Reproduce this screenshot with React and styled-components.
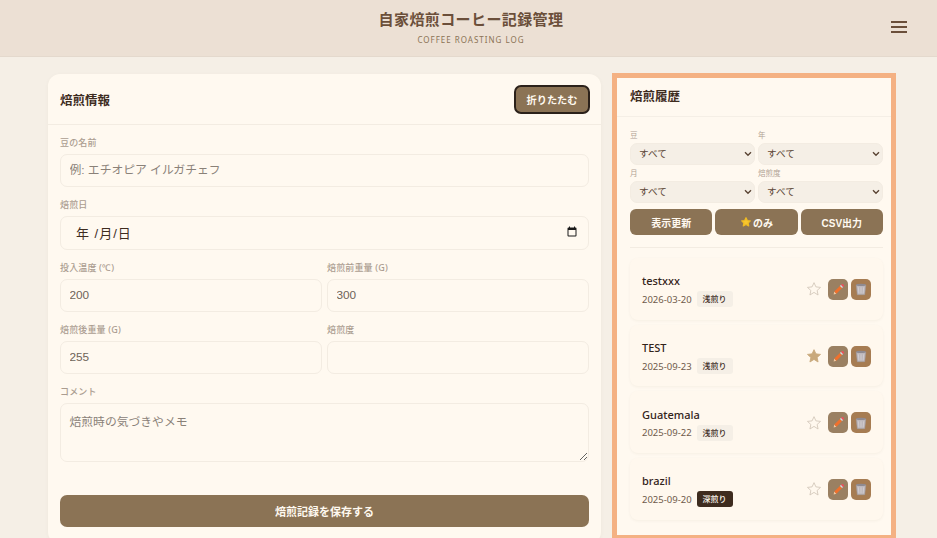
import React from "react";
import styled, { createGlobalStyle } from 'styled-components';

const FONT = `"Liberation Sans", "Noto Sans CJK JP", sans-serif`;
const NOTO = `"Noto Sans", "Noto Sans CJK JP", sans-serif`;

const chevron = `url("data:image/svg+xml,%3Csvg xmlns='http://www.w3.org/2000/svg' width='8' height='6' viewBox='0 0 8 6'%3E%3Cpath d='M1 1.2l3 3 3-3' fill='none' stroke='%235c4636' stroke-width='1.4'/%3E%3C/svg%3E")`;

const GlobalStyle = createGlobalStyle`
  html, body {
    margin: 0;
    height: 538px;
    overflow: hidden;
    background: #f5efe6;
    font-family: ${NOTO};
  }
  * { box-sizing: border-box; }
`;

const Header = styled.header`
  height: 57px;
  background: #ece0d4;
  border-bottom: 1px solid #e4d9cd;
  position: relative;
  display: flex;
  flex-direction: column;
  align-items: center;
  padding: 9px 0 0 5px;
`;
const SiteTitle = styled.div`
  color: #6b4f3a;
  font-size: 15px;
  line-height: 20px;
  font-weight: 700;
  letter-spacing: 0.4px;
`;
const SiteSub = styled.div`
  color: #8b7355;
  font-size: 8px;
  line-height: 12px;
  margin-top: 5px;
  letter-spacing: 1px;
`;
const Burger = styled.div`
  position: absolute;
  right: 30px;
  top: 21px;
  width: 16px;
  height: 12px;
  display: flex;
  flex-direction: column;
  justify-content: space-between;
  span {
    display: block;
    height: 2px;
    background: #6b4f3a;
  }
`;

const Main = styled.main`
  display: grid;
  grid-template-columns: 553px 274px;
  gap: 16px;
  padding: 17px 0 0 48px;
  align-items: start;
`;

const FormCard = styled.section`
  background: #fff9f0;
  border-radius: 12px;
  height: 470px;
  box-shadow: 0 1px 4px rgba(107, 79, 58, 0.04);
`;
const FormHead = styled.div`
  height: 51px;
  padding: 0 11px 0 12px;
  display: flex;
  align-items: center;
  justify-content: space-between;
  border-bottom: 1px solid #f3ece2;
`;
const CardTitle = styled.h2`
  margin: 0;
  color: #3e2c1f;
  font-size: 12.5px;
  font-weight: 700;
`;
const Button = styled.button`
  background: #8b7355;
  color: #fff9f0;
  border: 0;
  border-radius: 6px;
  font-family: ${FONT};
  font-weight: 700;
  font-size: 10px;
  cursor: pointer;
  display: flex;
  align-items: center;
  justify-content: center;
  gap: 1px;
  padding: 0;
`;
const CollapseButton = styled(Button)`
  width: 76px;
  height: 29px;
  border: 2px solid #2b211a;
  border-radius: 7px;
  font-size: 10.2px;
`;
const FormBody = styled.div`
  padding: 11px 12px 0;
  display: flex;
  flex-direction: column;
`;
const Row = styled.div`
  display: grid;
  grid-template-columns: 262px 262px;
  gap: 5px;
`;
const Field = styled.div`
  margin-bottom: 11px;
`;
const Label = styled.label`
  display: block;
  color: #ab9d90;
  font-size: 9px;
  line-height: 14px;
  height: 14px;
  margin-bottom: 4px;
  font-weight: 500;
  letter-spacing: 0.15px;
`;
const inputStyle = `
  display: block;
  width: 100%;
  background: #fff9f0;
  border: 1px solid #f3ece2;
  border-radius: 7px;
  outline: none;
  font-family: ${FONT};
  font-size: 11.8px;
  color: #6e6358;
  padding: 0 8.5px 2px;
  &::placeholder { color: #8a8178; opacity: 1; }
`;
const Input = styled.input`
  ${inputStyle}
  height: 33px;
`;
const DateBox = styled.div`
  ${inputStyle}
  height: 34px;
  color: #3e2c1f;
  display: flex;
  align-items: center;
  justify-content: space-between;
  font-size: 13px;
  letter-spacing: 1px;
  padding: 0 10px 2px 15px;
`;
const TextArea = styled.textarea`
  ${inputStyle}
  height: 59px;
  padding: 8px 8.5px;
  resize: vertical;
`;
const SaveButton = styled(Button)`
  width: 100%;
  height: 32px;
  margin-top: 22px;
  border-radius: 7px;
  font-size: 11px;
`;

const HistoryPanel = styled.aside`
  background: #fff9f0;
  outline: 5px solid #f4b183;
  height: 457px;
  margin-top: 4px;
  overflow: hidden;
`;
const HistoryHead = styled.div`
  height: 39px;
  padding: 0 13px 3px;
  display: flex;
  align-items: center;
  border-bottom: 1px solid #f5efe6;
`;
const Filters = styled.div`
  padding: 13px 8px 0 13px;
`;
const FilterGrid = styled.div`
  display: grid;
  grid-template-columns: 125px 125px;
  column-gap: 3px;
  row-gap: 3px;
`;
const FilterLabel = styled.label`
  display: block;
  color: #b0a193;
  font-size: 7.5px;
  line-height: 11px;
  margin-bottom: 2px;
`;
const Select = styled.select`
  display: block;
  width: 100%;
  height: 22px;
  appearance: none;
  background: #f5efe6 ${chevron} no-repeat right 2px center;
  border: 1px solid #f3ece2;
  border-radius: 7px;
  color: #5c4636;
  font-family: ${FONT};
  font-size: 9.6px;
  padding: 0 0 2px 8px;
  outline: none;
`;
const FilterButtons = styled.div`
  display: grid;
  grid-template-columns: repeat(3, 1fr);
  gap: 3px;
  margin-top: 6px;
  padding-bottom: 12px;
  border-bottom: 1px solid #f3ece2;
`;
const FilterButton = styled(Button)`
  height: 26px;
`;

const List = styled.div`
  padding: 10px 8px 0 13px;
  display: flex;
  flex-direction: column;
  gap: 5px;
`;
const Item = styled.div`
  height: 61.7px;
  flex: none;
  background: #fff8ee;
  border-radius: 8px;
  box-shadow: 0 1px 3px rgba(107, 79, 58, 0.06);
  padding: 0 12px;
  display: flex;
  align-items: center;
  justify-content: space-between;
`;
const ItemText = styled.div`
  padding-top: 3px;
`;
const ItemName = styled.div`
  color: #33241a;
  font-size: 11px;
  line-height: 16px;
  font-weight: 500;
`;
const ItemMeta = styled.div`
  display: flex;
  align-items: center;
  gap: 5px;
  margin-top: 2px;
  color: #6f5b4b;
  font-size: 9.5px;
`;
const Badge = styled.span`
  background: ${p => (p.$dark ? '#3e2c1f' : '#f5efe6')};
  color: ${p => (p.$dark ? '#fff9f0' : '#3e2c1f')};
  font-size: 8px;
  font-weight: 500;
  line-height: 16px;
  height: 16px;
  padding: 0 6px;
  border-radius: 3px;
`;
const Actions = styled.div`
  display: flex;
  align-items: center;
  gap: 3px;
  padding-top: 1px;
`;
const StarWrap = styled.span`
  width: 16px;
  height: 16px;
  margin-right: 3px;
  display: block;
  svg { display: block; }
`;
const IconButton = styled.button`
  width: 20px;
  height: 21px;
  padding: 0;
  border: 0;
  border-radius: 5px;
  background: ${p => (p.$trash ? '#a67c52' : '#9a8062')};
  display: flex;
  align-items: center;
  justify-content: center;
`;

const StarIcon = ({ filled }) => (
  <svg width="16" height="16" viewBox="0 0 24 24" fill={filled ? '#c9a97c' : 'none'} stroke={filled ? '#c9a97c' : '#d2c6b8'} strokeWidth="1.3">
    <path d="M12 2.5l2.9 6.3 6.9.8-5.1 4.6 1.4 6.8L12 17.1l-6.1 3.9 1.4-6.8L2.2 9.6l6.9-.8z" />
  </svg>
);
const GoldStar = () => (
  <svg width="12" height="12" viewBox="0 0 24 24" fill="#f7c62f" stroke="#efba22" strokeWidth="2.5" strokeLinejoin="round">
    <path d="M12 3.5l2.6 5.5 6 .8-4.4 4.1 1.2 5.9L12 17l-5.4 2.8 1.2-5.9-4.4-4.1 6-.8z" />
  </svg>
);
const PencilIcon = () => (
  <svg width="13" height="13" viewBox="0 0 16 16">
    <path d="M2 14l.8-3.4 2.6 2.6z" fill="#f3c9a0" />
    <path d="M2.8 10.6l7-7 2.6 2.6-7 7z" fill="#f0702c" />
    <path d="M9.8 3.6l1.3-1.3 2.6 2.6-1.3 1.3z" fill="#d6dbe0" />
    <path d="M11.1 2.3l.9-.9c.4-.4 1-.4 1.4 0l1.2 1.2c.4.4.4 1 0 1.4l-.9.9z" fill="#ee4f5b" />
  </svg>
);
const TrashIcon = () => (
  <svg width="14" height="14" viewBox="0 0 16 16">
    <path d="M2.5 3.5h11l-1.3 11H3.8z" fill="#bdb7bb" stroke="#a09a9e" strokeWidth="0.6" />
    <ellipse cx="8" cy="3.3" rx="5.6" ry="1.3" fill="#8f8a90" />
    <path d="M5 6l.5 7M8 6v7M11 6l-.5 7" stroke="#d8d4d6" strokeWidth="0.8" />
  </svg>
);
const CalendarIcon = () => (
  <svg width="12" height="12" viewBox="0 0 24 24" fill="#1a1a1a">
    <path d="M19 3h-1V1h-2v2H8V1H6v2H5a2 2 0 0 0-2 2v14a2 2 0 0 0 2 2h14a2 2 0 0 0 2-2V5a2 2 0 0 0-2-2zm0 16H5V8h14z" />
  </svg>
);

const roasts = [
  { name: 'testxxx', date: '2026-03-20', level: '浅煎り' },
  { name: 'TEST', date: '2025-09-23', level: '浅煎り', fav: true },
  { name: 'Guatemala', date: '2025-09-22', level: '浅煎り' },
  { name: 'brazil', date: '2025-09-20', level: '深煎り', dark: true },
];

const FilterSelect = ({ label }) => (
  <div>
    <FilterLabel>{label}</FilterLabel>
    <Select defaultValue="all">
      <option value="all">すべて</option>
    </Select>
  </div>
);

const App = () => (
  <>
    <GlobalStyle />
    <Header>
      <SiteTitle>自家焙煎コーヒー記録管理</SiteTitle>
      <SiteSub>COFFEE ROASTING LOG</SiteSub>
      <Burger><span /><span /><span /></Burger>
    </Header>
    <Main>
      <FormCard>
        <FormHead>
          <CardTitle>焙煎情報</CardTitle>
          <CollapseButton>折りたたむ</CollapseButton>
        </FormHead>
        <FormBody>
          <Field>
            <Label>豆の名前</Label>
            <Input placeholder="例: エチオピア イルガチェフ" />
          </Field>
          <Field>
            <Label>焙煎日</Label>
            <DateBox>
              <span>年 /月/日</span>
              <CalendarIcon />
            </DateBox>
          </Field>
          <Row>
            <Field>
              <Label>投入温度 (℃)</Label>
              <Input defaultValue="200" />
            </Field>
            <Field>
              <Label>焙煎前重量 (G)</Label>
              <Input defaultValue="300" />
            </Field>
          </Row>
          <Row>
            <Field>
              <Label>焙煎後重量 (G)</Label>
              <Input defaultValue="255" />
            </Field>
            <Field>
              <Label>焙煎度</Label>
              <Input />
            </Field>
          </Row>
          <Field>
            <Label>コメント</Label>
            <TextArea placeholder="焙煎時の気づきやメモ" />
          </Field>
          <SaveButton>焙煎記録を保存する</SaveButton>
        </FormBody>
      </FormCard>
      <HistoryPanel>
        <HistoryHead>
          <CardTitle>焙煎履歴</CardTitle>
        </HistoryHead>
        <Filters>
          <FilterGrid>
            <FilterSelect label="豆" />
            <FilterSelect label="年" />
            <FilterSelect label="月" />
            <FilterSelect label="焙煎度" />
          </FilterGrid>
          <FilterButtons>
            <FilterButton>表示更新</FilterButton>
            <FilterButton><GoldStar />のみ</FilterButton>
            <FilterButton>CSV出力</FilterButton>
          </FilterButtons>
        </Filters>
        <List>
          {roasts.map(r => (
            <Item key={r.name}>
              <ItemText>
                <ItemName>{r.name}</ItemName>
                <ItemMeta>
                  {r.date}
                  <Badge $dark={r.dark}>{r.level}</Badge>
                </ItemMeta>
              </ItemText>
              <Actions>
                <StarWrap><StarIcon filled={r.fav} /></StarWrap>
                <IconButton><PencilIcon /></IconButton>
                <IconButton $trash><TrashIcon /></IconButton>
              </Actions>
            </Item>
          ))}
        </List>
      </HistoryPanel>
    </Main>
  </>
);

export default App;
